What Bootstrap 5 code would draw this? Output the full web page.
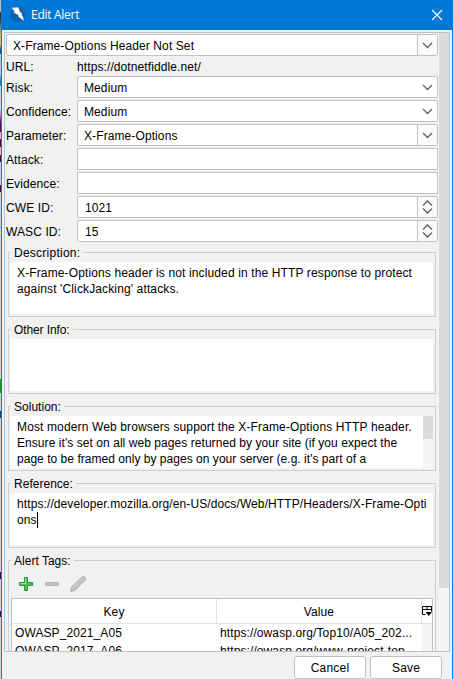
<!DOCTYPE html>
<html lang="en">
<head>
<meta charset="utf-8">
<meta name="viewport" content="width=device-width, initial-scale=1">
<title>Edit Alert</title>
<link href="https://cdn.jsdelivr.net/npm/bootstrap@5.3.0/dist/css/bootstrap.min.css" rel="stylesheet">
<style>
  body { width: 454px; height: 679px; background: #d4d7da; font: 12px/16px "Liberation Sans", Arial, sans-serif; color: #000; letter-spacing: .1px; }
  .edge { width: 1px; background: linear-gradient(#b6bbc0 0 12px, #203850 12px 19px, #c3b98a 34px 44px, #22496e 50px 54px, #b7c6d3 54px 74px, #3584c4 80px 86px, #ccd2d6 86px 110px, #3d1240 124px 132px, #d6c3b2 132px 139px, #3d1240 139px 147px, #d6c3b2 147px 155px, #3d1240 155px 162px, #ccd 162px 185px, #3d1240 185px 192px, #d0d3d6 192px 379px, #159431 379px 393px, #d0d3d6 393px 411px, #173d66 411px 418px, #d0d3d6 418px 572px, #3d1240 572px 579px, #d0d3d6 579px 611px, #3d1240 611px 617px, #d0d3d6 617px); }
  .edge-right { width: 1px; background: #cfd4d8; }
  .win { border: solid #0078d7; border-width: 0 1px; width: 452px; background: #f1f1f1; }
  .win { border-left-color: #2377bd; }
  .titlebar { height: 30px; background: #0078d7; padding-left: 8px; padding-right: 9px; color: #fff; }
  .titlebar h1 { font: 12px/16px "Open Sans", "Noto Sans", sans-serif; letter-spacing: -.28px; margin: 0 0 0 5px; }
  .pane { margin: 2px 2px 0; height: 620px; border: 1px solid #c2c2c2; }
  .form-area { width: 434px; padding: 1px 1px 0 1px; }
  .track { width: 10px; background: #f5f5f5; }
  .thumb { height: 555px; background: #dbdbdb; }
  .field { height: 22px; border: 1px solid #c2c2c2; background: #fff; border-radius: 2px; padding-left: 6px; }
  .field > span { padding-top: 1px; }
  .field > .num { padding-left: 1px; }
  .field.plain { border-radius: 0; }
  .arrow { width: 20px; height: 20px; }
  .arrow.split { border-left: 1px solid #c2c2c2; background: #fafafa; }
  .arrow svg { stroke: #606060; fill: none; stroke-width: 1.25; display: block; }
  .form-row { height: 24px; }
  .cap { width: 71px; }
  .url-row { height: 20px; padding-top: 2px; }
  .groups { padding-top: 8px; }
  .box { margin: 0 2px 12px 2px; height: 65px; border: 1px solid #cfcfcf; padding: 0 2px; }
  .box-cap { margin-top: -8px; height: 16px; }
  .box-cap span { background: #f1f1f1; padding: 0 3px; display: inline-block; letter-spacing: .02px; }
  .box-cap .wide { letter-spacing: .25px; }
  .box-cap .tight { letter-spacing: -.1px; }
  .memo { margin-top: 1px; height: 52px; background: #fff; padding: 3px 0 0 6px; white-space: nowrap; }
  .memo div { height: 16px; }
  .ls-a { letter-spacing: .13px; }
  .ls-b { letter-spacing: .06px; }
  .ls-c { letter-spacing: .03px; }
  .caret { display: inline-block; width: 1px; height: 16px; background: #000; vertical-align: top; }
  .memo-track { width: 10px; height: 52px; background: #f5f5f5; margin-top: -3px; }
  .memo-thumb { height: 23px; background: #dbdbdb; }
  .tags { height: 130px; margin-bottom: 0; }
  .tools { height: 29px; padding: 7px 0 0 7px; gap: 10px; }
  .tag-table { height: 120px; border: 1px solid #c2c2c2; background: #fff; }
  .thead-row { height: 25px; border-bottom: 1px solid #e0e0e0; }
  .key-col, .val-col { width: 205px; }
  .thead-row .key-col, .thead-row .val-col { border-right: 1px solid #e0e0e0; }
  .thead-row .cell { padding-top: 5px; }
  .trow { height: 18px; line-height: 19px; }
  .trow > div { padding-left: 3px; }
  .tfiller { width: 10px; background: #f5f5f5; }
  .actions { padding: 4px 10px 0 0; gap: 4px; }
  .dlg-btn { --bs-btn-padding-x: 0; --bs-btn-padding-y: 0; --bs-btn-font-size: 12px; --bs-btn-line-height: 16px; --bs-btn-border-radius: 3px; --bs-btn-bg: #fff; --bs-btn-border-color: #c2c2c2; --bs-btn-color: #000; width: 72px; height: 23px; letter-spacing: .2px; }
</style>
<script src="https://cdn.jsdelivr.net/npm/bootstrap@5.3.0/dist/js/bootstrap.bundle.min.js"></script>
</head>
<body class="d-flex overflow-hidden">
<div class="edge"></div>
<main class="win d-flex flex-column">
  <header class="titlebar d-flex align-items-center">
    <svg width="16" height="16" viewBox="0 0 16 16"><circle cx="8" cy="8" r="7.5" fill="#0f62b0"/><path d="M1.300.5 8.300 0 10.600 5.200 11.800 5.800 12.600 9.300 13.400 10 14.200 14.500 7.800 9.300 8.300 8.400 3.400 5.400 4.200 4.500z" fill="#fff" stroke="#26466b" stroke-width=".5"/></svg>
    <h1>Edit Alert</h1>
    <svg class="ms-auto" width="12" height="12" viewBox="0 0 12 12" stroke="#fff" stroke-width="1.1"><path d="M1 1l10 10M11 1 1 11"/></svg>
  </header>
  <section class="pane d-flex overflow-hidden">
    <div class="form-area flex-shrink-0">
      <div class="field d-flex align-items-center"><span>X-Frame-Options Header Not Set</span><div class="arrow split ms-auto"><svg width="19" height="20"><path d="M5 8l4.5 4.5L14 8"/></svg></div></div>
      <div class="url-row d-flex align-items-center"><span class="cap">URL:</span><span>https://dotnetfiddle.net/</span></div>
      <div class="form-row d-flex"><label class="cap pt-1">Risk:</label><div class="field flex-fill d-flex align-items-center"><span>Medium</span><div class="arrow ms-auto"><svg width="20" height="20"><path d="M6 8l4.5 4.5L15 8"/></svg></div></div></div>
      <div class="form-row d-flex"><label class="cap pt-1">Confidence:</label><div class="field flex-fill d-flex align-items-center"><span>Medium</span><div class="arrow ms-auto"><svg width="20" height="20"><path d="M6 8l4.5 4.5L15 8"/></svg></div></div></div>
      <div class="form-row d-flex"><label class="cap pt-1">Parameter:</label><div class="field flex-fill d-flex align-items-center"><span>X-Frame-Options</span><div class="arrow split ms-auto"><svg width="19" height="20"><path d="M5 8l4.5 4.5L14 8"/></svg></div></div></div>
      <div class="form-row d-flex"><label class="cap pt-1">Attack:</label><div class="field plain flex-fill"></div></div>
      <div class="form-row d-flex"><label class="cap pt-1">Evidence:</label><div class="field plain flex-fill"></div></div>
      <div class="form-row d-flex"><label class="cap pt-1">CWE ID:</label><div class="field flex-fill d-flex align-items-center"><span class="num">1021</span><div class="arrow split ms-auto"><svg width="19" height="20"><path d="M5 8.5 9.5 4 14 8.5M5 11.5 9.5 16l4.5-4.5"/></svg></div></div></div>
      <div class="form-row d-flex"><label class="cap pt-1">WASC ID:</label><div class="field flex-fill d-flex align-items-center"><span class="num">15</span><div class="arrow split ms-auto"><svg width="19" height="20"><path d="M5 8.5 9.5 4 14 8.5M5 11.5 9.5 16l4.5-4.5"/></svg></div></div></div>
      <div class="groups">
        <div class="box"><div class="box-cap"><span class="wide">Description:</span></div>
          <div class="memo"><div class="ls-a">X-Frame-Options header is not included in the HTTP response to protect</div><div class="ls-a">against 'ClickJacking' attacks.</div></div></div>
        <div class="box"><div class="box-cap"><span class="tight">Other Info:</span></div><div class="memo"></div></div>
        <div class="box"><div class="box-cap"><span>Solution:</span></div>
          <div class="memo d-flex"><section class="flex-fill"><div class="ls-a">Most modern Web browsers support the X-Frame-Options HTTP header.</div><div class="ls-b">Ensure it's set on all web pages returned by your site (if you expect the</div><div class="ls-c">page to be framed only by pages on your server (e.g. it's part of a</div></section><aside class="memo-track"><p class="memo-thumb m-0"></p></aside></div></div>
        <div class="box"><div class="box-cap"><span>Reference:</span></div>
          <div class="memo"><div>https://developer.mozilla.org/en-US/docs/Web/HTTP/Headers/X-Frame-Opti</div><div>ons<span class="caret"></span></div></div></div>
        <div class="box tags"><div class="box-cap"><span>Alert Tags:</span></div>
          <div class="tools d-flex">
            <svg width="16" height="16" viewBox="0 0 16 16"><path d="M6.5 1.5h3v5h5v3h-5v5h-3v-5h-5v-3h5z" fill="#4fc34f" stroke="#27953a"/><path d="M7.5 2.5v5h-5" stroke="#9be69b" fill="none"/></svg>
            <svg width="16" height="16" viewBox="0 0 16 16"><rect x="1.5" y="6.5" width="13" height="3" rx=".6" fill="#c4c4c4" stroke="#b0b0b0"/></svg>
            <svg width="16" height="16" viewBox="0 0 16 16"><path d="M.7 15.3 1.2 11.5 11.5 1.3Q13.5-.2 15 1.3T14.8 4.500L4.500 14.800z" fill="#c2c2c2" stroke="#aaa" stroke-width=".9"/><path d="M2.500 12.300 12.500 2.300" stroke="#d8d8d8"/></svg>
          </div>
          <div class="tag-table">
            <div class="thead-row d-flex align-items-center text-center"><div class="key-col cell h-100">Key</div><div class="val-col cell h-100">Value</div>
              <svg width="10" height="11" viewBox="0 0 10 11" fill="none" stroke="#000"><path d="M.5 .5h9v5M.5.5v8h3M.5 3.500h9M5 .5v4"/><path d="M3.500 6h6.500L6.800 10z" fill="#000" stroke="none"/></svg></div>
            <div class="d-flex"><div><div class="trow d-flex"><div class="key-col">OWASP_2021_A05</div><div class="val-col">https://owasp.org/Top10/A05_202...</div></div>
            <div class="trow d-flex"><div class="key-col">OWASP_2017_A06</div><div class="val-col">https://owasp.org/www-project-top...</div></div></div><div class="tfiller"></div></div>
          </div>
        </div>
      </div>
    </div>
    <div class="track"><div class="thumb"></div></div>
  </section>
  <footer class="actions d-flex justify-content-end"><button class="btn dlg-btn">Cancel</button><button class="btn dlg-btn">Save</button></footer>
</main>
<div class="edge-right"></div>
</body>
</html>
